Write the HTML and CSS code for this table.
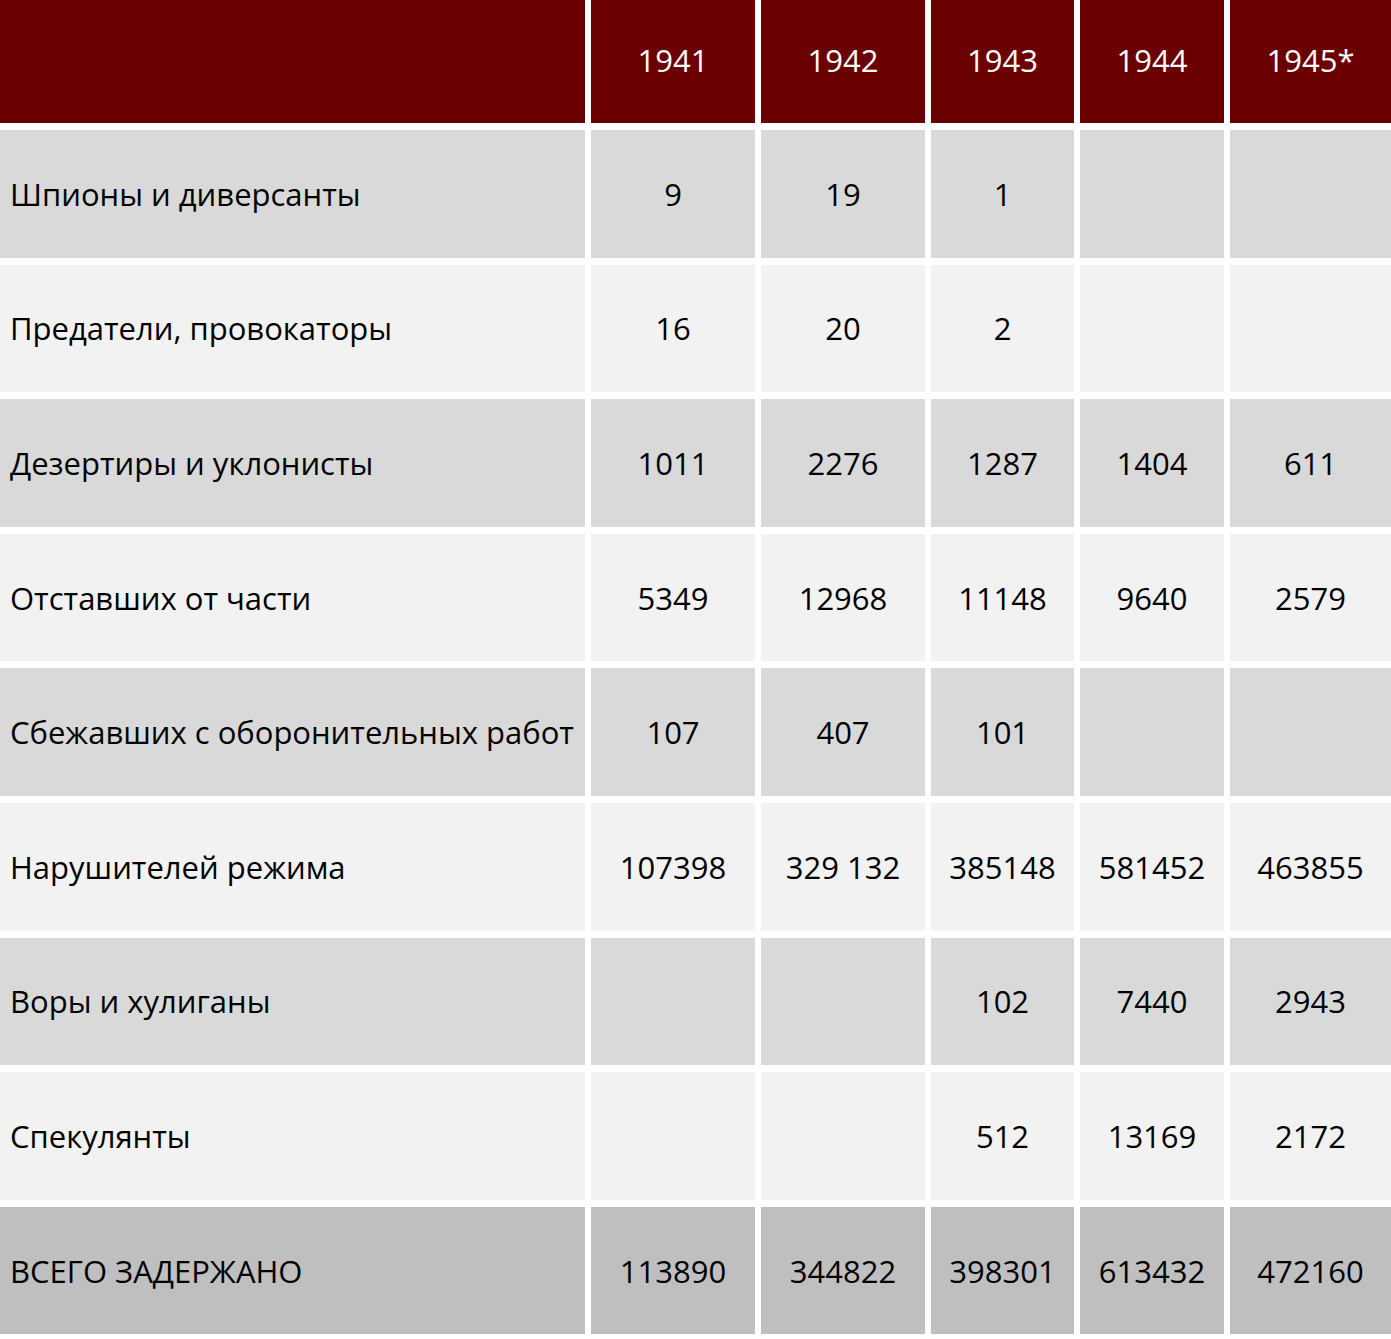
FILE: index.html
```html
<!DOCTYPE html>
<html lang="ru">
<head>
<meta charset="utf-8">
<link rel="stylesheet" href="styles.css">
</head>
<body>
<div class="table">
  <div class="cell head"></div>
  <div class="cell head num">1941</div>
  <div class="cell head num">1942</div>
  <div class="cell head num">1943</div>
  <div class="cell head num">1944</div>
  <div class="cell head num">1945*</div>

  <div class="cell dark label">Шпионы и диверсанты</div>
  <div class="cell dark num">9</div>
  <div class="cell dark num">19</div>
  <div class="cell dark num">1</div>
  <div class="cell dark num"></div>
  <div class="cell dark num"></div>

  <div class="cell light label">Предатели, провокаторы</div>
  <div class="cell light num">16</div>
  <div class="cell light num">20</div>
  <div class="cell light num">2</div>
  <div class="cell light num"></div>
  <div class="cell light num"></div>

  <div class="cell dark label">Дезертиры и уклонисты</div>
  <div class="cell dark num">1011</div>
  <div class="cell dark num">2276</div>
  <div class="cell dark num">1287</div>
  <div class="cell dark num">1404</div>
  <div class="cell dark num">611</div>

  <div class="cell light label">Отставших от части</div>
  <div class="cell light num">5349</div>
  <div class="cell light num">12968</div>
  <div class="cell light num">11148</div>
  <div class="cell light num">9640</div>
  <div class="cell light num">2579</div>

  <div class="cell dark label">Сбежавших с оборонительных работ</div>
  <div class="cell dark num">107</div>
  <div class="cell dark num">407</div>
  <div class="cell dark num">101</div>
  <div class="cell dark num"></div>
  <div class="cell dark num"></div>

  <div class="cell light label">Нарушителей режима</div>
  <div class="cell light num">107398</div>
  <div class="cell light num">329 132</div>
  <div class="cell light num">385148</div>
  <div class="cell light num">581452</div>
  <div class="cell light num">463855</div>

  <div class="cell dark label">Воры и хулиганы</div>
  <div class="cell dark num"></div>
  <div class="cell dark num"></div>
  <div class="cell dark num">102</div>
  <div class="cell dark num">7440</div>
  <div class="cell dark num">2943</div>

  <div class="cell light label">Спекулянты</div>
  <div class="cell light num"></div>
  <div class="cell light num"></div>
  <div class="cell light num">512</div>
  <div class="cell light num">13169</div>
  <div class="cell light num">2172</div>

  <div class="cell total label">ВСЕГО ЗАДЕРЖАНО</div>
  <div class="cell total num">113890</div>
  <div class="cell total num">344822</div>
  <div class="cell total num">398301</div>
  <div class="cell total num">613432</div>
  <div class="cell total num">472160</div>
</div>
</body>
</html>
```

FILE: styles.css
```css
html, body {
  margin: 0;
  padding: 0;
  background: #ffffff;
}

.table {
  display: grid;
  grid-template-columns: 585px 164px 164px 143px 144px 161px;
  grid-template-rows: 123px repeat(9, 127.6px);
  column-gap: 6px;
  row-gap: 7px;
  width: 1391px;
  font-family: "Open Sans", "Liberation Sans", sans-serif;
  font-size: 31px;
  color: #000000;
}

.cell {
  display: flex;
  align-items: center;
  box-sizing: border-box;
  white-space: nowrap;
}

.num {
  justify-content: center;
}

.label {
  padding-left: 10px;
}

.head {
  background: #6b0000;
  color: #ffffff;
  padding-bottom: 4px;
}

.dark {
  background: #d9d9d9;
}

.light {
  background: #f2f2f2;
}

.total {
  background: #bfbfbf;
}
```
